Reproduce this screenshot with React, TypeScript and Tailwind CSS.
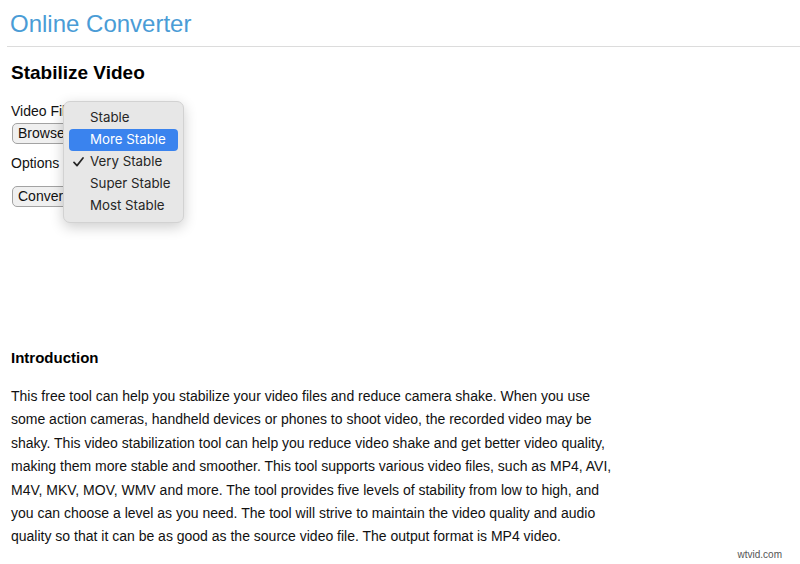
import React from "react";

const levels = ["Stable", "More Stable", "Very Stable", "Super Stable", "Most Stable"];

function LevelMenu({ active, selected }: { active: string; selected: string }) {
  return (
    <div
      className="absolute left-[63px] top-[101px] w-[121px] rounded-[7px] border border-[#d2d2d2] bg-[#e7e7e7] py-[5px] shadow-[0_4px_14px_rgba(0,0,0,0.2)]"
      style={{ fontFamily: "Inter, 'Noto Sans', sans-serif" }}
    >
      {levels.map((l) => {
        const isActive = l === active;
        return (
          <div
            key={l}
            className={`relative mx-[5px] flex h-[22px] items-center rounded-[4px] pl-[21px] text-[13.3px] ${
              isActive ? "bg-[#3a83ee] text-white" : "text-[#262626]"
            }`}
          >
            {l === selected && (
              <svg
                className="absolute left-[4px] top-[6px]"
                width="11"
                height="10"
                viewBox="0 0 11 10"
                fill="none"
              >
                <path
                  d="M1 5.4 L4 8.6 L10 1"
                  stroke="currentColor"
                  strokeWidth="1.7"
                  strokeLinecap="round"
                  strokeLinejoin="round"
                />
              </svg>
            )}
            <span>{l}</span>
          </div>
        );
      })}
    </div>
  );
}

export default function App() {
  return (
    <div
      className="relative h-[564px] w-full overflow-hidden bg-white pl-[7px] text-[#111]"
      style={{ fontFamily: "'Liberation Sans', Arial, sans-serif" }}
    >
      <header>
        <h1 className="pl-[3px] pt-[10px] text-[24px] leading-[28px] text-[#4a9cd6]">
          Online Converter
        </h1>
        <div className="mt-[8px] border-t border-[#dcdcdc]" />
      </header>

      <main className="pl-[4px]">
        <h2 className="mt-[15px] text-[19px] font-bold leading-[22px] text-black">
          Stabilize Video
        </h2>

        <form className="mt-[18px]">
          <label className="block text-[14px] leading-[18px]">Video File:</label>
          <div className="mt-[3px] flex items-center gap-[6px]">
            <button
              type="button"
              className="ml-[1px] h-[21px] rounded-[5px] border border-[#a3a3a3] bg-[#f0f0f0] px-[5px] text-[14px] leading-[19px] text-[#111]"
            >
              Browse...
            </button>
            <span className="text-[13px]">No file selected.</span>
          </div>

          <label className="mt-[10px] block text-[14px] leading-[18px]">Options</label>

          <button
            type="button"
            className="ml-[1px] mt-[14px] h-[21px] rounded-[5px] border border-[#a3a3a3] bg-[#f0f0f0] px-[5px] text-[14px] leading-[19px] text-[#111]"
          >
            Convert Now
          </button>
        </form>

        <h3 className="mt-[141px] text-[15px] font-bold leading-[18px] text-black">
          Introduction
        </h3>
        <p className="mt-[18px] w-[606px] text-[14px] leading-[23.4px]">
          This free tool can help you stabilize your video files and reduce camera shake. When
          you use some action cameras, handheld devices or phones to shoot video, the recorded
          video may be shaky. This video stabilization tool can help you reduce video shake and
          get better video quality, making them more stable and smoother. This tool supports
          various video files, such as MP4, AVI, M4V, MKV, MOV, WMV and more. The tool provides
          five levels of stability from low to high, and you can choose a level as you need. The
          tool will strive to maintain the video quality and audio quality so that it can be as
          good as the source video file. The output format is MP4 video.
        </p>
      </main>

      <LevelMenu active="More Stable" selected="Very Stable" />

      <span className="absolute bottom-[2px] right-[18px] text-[10px] text-[#555]">wtvid.com</span>
    </div>
  );
}
